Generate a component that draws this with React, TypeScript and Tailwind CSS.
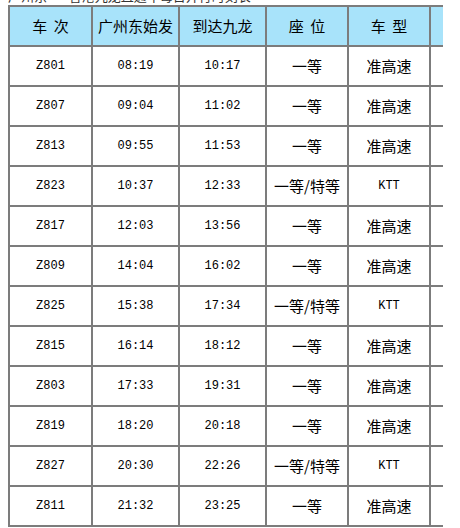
const trains = [
  { no: 'Z801', dep: '08:19', arr: '10:17', seat: '一等', type: '准高速' },
  { no: 'Z807', dep: '09:04', arr: '11:02', seat: '一等', type: '准高速' },
  { no: 'Z813', dep: '09:55', arr: '11:53', seat: '一等', type: '准高速' },
  { no: 'Z823', dep: '10:37', arr: '12:33', seat: '一等/特等', type: 'KTT' },
  { no: 'Z817', dep: '12:03', arr: '13:56', seat: '一等', type: '准高速' },
  { no: 'Z809', dep: '14:04', arr: '16:02', seat: '一等', type: '准高速' },
  { no: 'Z825', dep: '15:38', arr: '17:34', seat: '一等/特等', type: 'KTT' },
  { no: 'Z815', dep: '16:14', arr: '18:12', seat: '一等', type: '准高速' },
  { no: 'Z803', dep: '17:33', arr: '19:31', seat: '一等', type: '准高速' },
  { no: 'Z819', dep: '18:20', arr: '20:18', seat: '一等', type: '准高速' },
  { no: 'Z827', dep: '20:30', arr: '22:26', seat: '一等/特等', type: 'KTT' },
  { no: 'Z811', dep: '21:32', arr: '23:25', seat: '一等', type: '准高速' },
];

const cjk = "font-['Noto_Sans_CJK_SC',sans-serif]";
const mono = "font-['Liberation_Mono','Noto_Sans_CJK_SC',monospace]";
const cell = 'flex items-center justify-center border-l-2 border-b-2 border-[#7c7c7c] text-black';

export default function App() {
  return (
    <div className="h-[528px] w-[460px] overflow-hidden bg-white">
      {/* caption above the table, cut by the top edge */}
      <div className="h-[5px] overflow-hidden">
        <p className={`-mt-[12px] pl-[8px] text-[13px] leading-[16px] text-[#333] ${cjk}`}>
          广州东——香港九龙直通车每日开行时刻表
        </p>
      </div>

      <div className="ml-[8px] grid grid-cols-[83px_87px_87px_82px_82px_14px]">
        {['车\u00a0\u00a0次', '广州东始发', '到达九龙', '座\u00a0\u00a0位', '车\u00a0\u00a0型', ''].map((h, i) => (
          <div
            key={i}
            className={`${cell} h-[42px] border-t-2 bg-[#a8e3fa] text-[15px] text-[#111] ${cjk}`}
          >
            {h}
          </div>
        ))}

        {trains.map((t) => (
          <Row key={t.no} train={t} />
        ))}
      </div>
    </div>
  );
}

function Row({ train }: { train: (typeof trains)[number] }) {
  return (
    <>
      <div className={`${cell} h-[40px] text-[12px] text-[#222] ${mono}`}>{train.no}</div>
      <div className={`${cell} h-[40px] text-[12px] text-[#222] ${mono}`}>{train.dep}</div>
      <div className={`${cell} h-[40px] text-[12px] text-[#222] ${mono}`}>{train.arr}</div>
      <div className={`${cell} h-[40px] text-[15px] ${cjk}`}>{train.seat}</div>
      <div
        className={`${cell} h-[40px] ${train.type === 'KTT' ? `text-[12px] text-[#222] ${mono}` : `text-[15px] ${cjk}`}`}
      >
        {train.type}
      </div>
      <div className={`${cell} h-[40px]`} />
    </>
  );
}
